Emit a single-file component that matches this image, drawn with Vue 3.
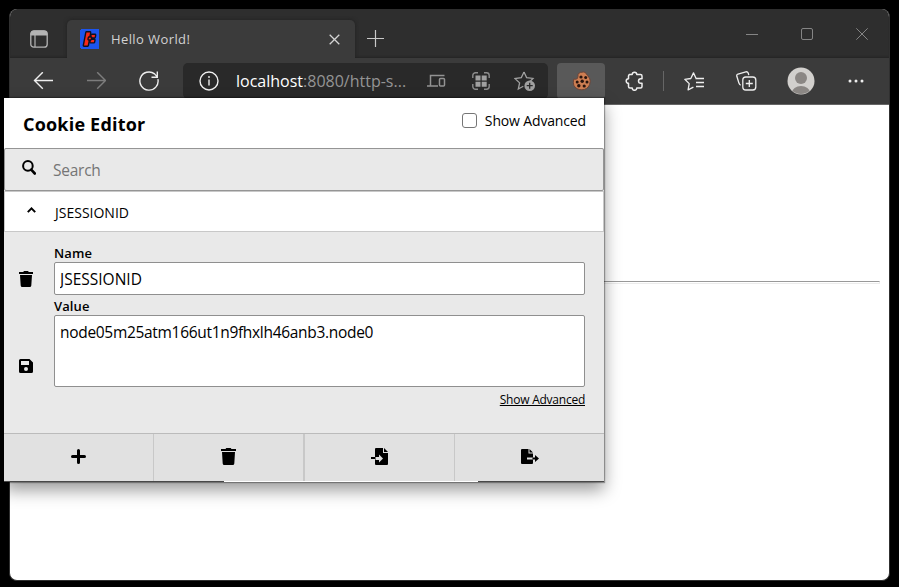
<script setup>
import { ref } from 'vue'

const tabTitle = 'Hello World!'
const cookieName = ref('JSESSIONID')
const cookieValue = ref('node05m25atm166ut1n9fhxlh46anb3.node0')
const search = ref('')
const advanced = ref(false)
</script>

<template>
  <div class="desktop">
    <div class="window">
      <header class="titlebar">
        <div class="tab-menu">
          <svg width="18" height="18" viewBox="0 0 18 18" fill="none" stroke="#b4b4b4">
            <path d="M1 5V4a3 3 0 0 1 3-3h10a3 3 0 0 1 3 3v1z" fill="#b4b4b4" />
            <rect x=".8" y=".8" width="16.4" height="16.4" rx="3" stroke-width="1.3" />
            <path d="M5 5v12" stroke-width="1.2" />
          </svg>
        </div>
        <div class="tab">
          <svg class="favicon" width="19" height="20" viewBox="0 0 19 20">
            <path d="M0 1h1V0h18v20H1v-1H0z" fill="#1d55ee" />
            <g fill="#fb2917" stroke="#111020" stroke-width="2.800" stroke-linejoin="round" paint-order="stroke"><path d="M6.500 3.500H10L7.700 16.500H4z" /><path d="M11.700 6H15l-.4 2.300h-3.300zM11 11h3.300l-.4 2.200h-3.300z" /><path d="M9 8.700h2l-.3 1.600h-2z" /></g>
          </svg>
          <span class="tab-title">{{ tabTitle }}</span>
          <svg class="tab-close" width="11" height="11" viewBox="0 0 11 11" stroke="#d4d4d4" stroke-width="1.300"><path d="M.7.7l9.600 9.600M10.300.7L.7 10.300" /></svg>
        </div>
        <svg class="new-tab" width="17" height="17" viewBox="0 0 17 17" stroke="#c9c9c9" stroke-width="1.200"><path d="M8.500 0v17M0 8.500h17" /></svg>
        <div class="controls">
          <svg width="12" height="12" viewBox="0 0 12 12" stroke="#858585"><path d="M0 6.500h12" /></svg>
          <svg width="12" height="12" viewBox="0 0 12 12" fill="none" stroke="#858585"><rect x=".5" y=".5" width="11" height="11" rx="1.500" /></svg>
          <svg width="12" height="12" viewBox="0 0 12 12" stroke="#858585"><path d="M.3.3l11.400 11.400M11.700.3L.3 11.700" /></svg>
        </div>
      </header>

      <div class="toolbar">
        <div class="tool"><svg width="20" height="18" viewBox="0 0 20 18" fill="none" stroke="#eee" stroke-width="1.400"><path d="M20 8.500H1.500M9.800.2L1.500 8.500l8.300 8.300" /></svg></div>
        <div class="tool"><svg width="20" height="18" viewBox="0 0 20 18" fill="none" stroke="#7d7d7d" stroke-width="1.400"><path d="M1 8.500H19.500M11.200.2L19.500 8.500l-8.300 8.300" /></svg></div>
        <div class="tool"><svg width="20" height="20" viewBox="0 0 20 20" fill="none" stroke="#eee" stroke-width="1.400"><path d="M18.900 8.200A9.100 9.100 0 1 1 15.600 2.900L18 5.600M18.300.5v5.800h-5.800" /></svg></div>
        <div class="address">
          <svg class="info" width="20" height="20" viewBox="0 0 20 20" fill="none" stroke="#eee" stroke-width="1.400"><circle cx="10" cy="10" r="9" /><path d="M10 8.500v6" /><circle cx="10" cy="6" r=".9" fill="#eee" stroke="none" /></svg>
          <span class="url"><b>localhost</b>:8080/http-s...</span>
          <svg class="devices" width="19" height="14" viewBox="0 0 19 14" fill="none" stroke="#929292" stroke-width="1.500"><path d="M17.500 1.500h-14v10M0 12h11" /><rect x="12.500" y="4.500" width="5" height="7.500" rx="1" /></svg>
          <svg class="qr" width="18" height="18" viewBox="0 0 18 18" fill="none" stroke="#8c8c8c" stroke-width="1.400"><path d="M.8 6V3.500A2.700 2.700 0 0 1 3.500.8H6M12 .8h2.500a2.700 2.700 0 0 1 2.700 2.700V6M17.200 12v2.500a2.700 2.700 0 0 1-2.700 2.700H12M6 17.200H3.500a2.700 2.700 0 0 1-2.700-2.700V12" /><path d="M3.500 3.500h5v5h-5zM9.700 3.500h5v5h-5zM3.500 9.700h5v5h-5zM9.700 9.700h5v5h-5z" fill="#a0a0a0" stroke="none" /></svg>
          <svg class="fav" width="22" height="21" viewBox="0 0 22 21" fill="none" stroke="#a0a0a0" stroke-width="1.300"><path d="M10 1l2.600 5.600 6.400.8-4 4.100M10 1L7.300 6.600.9 7.500l4.700 4.400L4.300 18l5-2.700" /><circle cx="15.700" cy="14.700" r="5.300" fill="#a0a0a0" stroke="none" /><path d="M15.700 11.700v6M12.700 14.700h6" stroke="#292929" stroke-width="1.300" /></svg>
        </div>
        <div class="extension">
          <svg width="19" height="20" viewBox="0 0 19 20"><path d="M6 3Q8 .8 11.500 1q1.500.2 2.500 1.200.200 1.500 1.700 2 .200 2 1.800 2.600 1.500 3.300.1 6.900-2.300 5.100-7.800 5.100-5.600 0-8-4.500-1-3 0-6.300 2 .8 3.600-.5Q6.300 5.500 6 3z" fill="#cd7e52" stroke="#6e4538" /><g fill="#28140e"><circle cx="9" cy="6" r="1.600" /><circle cx="13.700" cy="6.500" r="1.500" /><circle cx="5.200" cy="11" r="1.500" /><circle cx="10.200" cy="10.300" r="1.700" /><circle cx="15" cy="11" r="1.500" /><circle cx="6.800" cy="14.800" r="1.700" /><circle cx="12.200" cy="15" r="1.600" /></g></svg>
        </div>
        <div class="tool puzzle"><svg width="19" height="20" viewBox="0 0 19 20" fill="none" stroke="#eee" stroke-width="1.500" stroke-linejoin="round"><path d="M4 3.500h3.200a2.300 2.300 0 0 1 4.600 0H15.500q1.500 0 1.500 1.500v2.700h-1.200a2.300 2.300 0 0 0 0 4.600H17V15.500q0 1.500-1.500 1.500h-3.700a2.300 2.300 0 0 1-4.600 0H5q-1.500 0-1.500-1.500v-3.200a2.300 2.300 0 0 1 0-4.600V5q0-1.500 1.500-1.500" /></svg></div>
        <div class="divider"></div>
        <div class="tool star"><svg width="20" height="19" viewBox="0 0 20 19" fill="none" stroke="#eee" stroke-width="1.300" stroke-linejoin="round"><path d="M12 6.200L9.500.9 6.800 6.500.8 7.300l4.400 4.300-1.100 6.300 5.300-2.800M11.500 6.500H20M12 10.500h8M12 14.500h8" /></svg></div>
        <div class="tool"><svg width="21" height="20" viewBox="0 0 21 20" fill="none" stroke="#eee" stroke-width="1.300"><path d="M4.700 14.200q-1.300-.4-1.700-2L.8 5.300Q.4 3.600 2 3L9.800.8q1.700-.4 2.400 1.200l.6 2.200" /><rect x="6.800" y="6" width="13" height="13" rx="3" /><path d="M13.300 9v7M9.800 12.500h7" /></svg></div>
        <div class="tool profile"><svg width="28" height="28" viewBox="0 0 28 28"><defs><clipPath id="face"><circle cx="14" cy="14" r="13" /></clipPath></defs><circle cx="14" cy="14" r="13.500" fill="#d2d0cd" /><g clip-path="url(#face)" fill="#8b8784"><circle cx="14" cy="11" r="6" /><ellipse cx="14" cy="25.500" rx="9" ry="6.500" /></g></svg></div>
        <div class="tool more"><svg width="16" height="4" viewBox="0 0 16 4" fill="#eee"><circle cx="2" cy="2" r="1.500" /><circle cx="8" cy="2" r="1.500" /><circle cx="14" cy="2" r="1.500" /></svg></div>
      </div>
      <main class="page"><div class="rule"></div></main>
    </div>

    <section class="popup">
      <header class="popup-head">
        <h1>Cookie Editor</h1>
        <label class="toggle"><input v-model="advanced" type="checkbox" /><span>Show Advanced</span></label>
      </header>
      <div class="search">
        <svg width="14" height="15" viewBox="0 0 14 15" fill="none" stroke="#000"><circle cx="5.900" cy="5.900" r="4.800" stroke-width="2" /><path d="M9.200 9.700l3.600 3.800" stroke-width="2.600" stroke-linecap="round" /></svg>
        <input v-model="search" placeholder="Search" />
      </div>
      <div class="cookie-row">
        <svg width="9" height="6" viewBox="0 0 9 6" fill="none" stroke="#000" stroke-width="2"><path d="M.8 5.100l3.700-3.700 3.700 3.700" /></svg>
        <span>{{ cookieName }}</span>
      </div>
      <div class="editor">
        <div class="side">
          <svg width="14" height="16" viewBox="0 0 14 16"><path d="M0 1h4.200l.8-1h4l.8 1H14v2H0zM1 4h12l-.7 10.500q-.1 1.500-1.600 1.500H3.300q-1.500 0-1.600-1.500z" /></svg>
          <svg width="14" height="14" viewBox="0 0 14 14"><path fill-rule="evenodd" d="M1.500 0h9L14 3.500v9q0 1.500-1.500 1.500h-11Q0 14 0 12.500v-11Q0 0 1.500 0zM2 2v4h8V2zm5 6a2 2 0 1 0 0 4 2 2 0 0 0 0-4z" /></svg>
        </div>
        <div class="fields">
          <label class="caption">Name</label>
          <input v-model="cookieName" class="name-input" />
          <label class="caption second">Value</label>
          <textarea v-model="cookieValue"></textarea>
          <a class="more-link">Show Advanced</a>
        </div>
      </div>
      <footer class="actions">
        <div class="action"><svg width="16" height="16" viewBox="0 0 16 16" stroke="#000" stroke-width="3" stroke-linecap="round"><path d="M7.500 1.500v12M1.500 7.500h12" /></svg></div>
        <div class="action"><svg width="15" height="17" viewBox="0 0 15 17"><path d="M0 1h4.500l.8-1h4.400l.8 1H15v2H0zM1 4h13l-.7 11.500q-.1 1.500-1.600 1.500H3.300q-1.500 0-1.600-1.500z" /></svg></div>
        <div class="action"><svg width="18" height="17" viewBox="0 0 18 17"><path d="M5 0h7v5h5v11q0 1-1 1H5q-1 0-1-1V1q0-1 1-1zM13 0l4 4h-4z" /><path d="M0 10h4.500" stroke="#000" stroke-width="2" /><path d="M4.500 9H8V6.500l4 4-4 4V12H4.500z" fill="#e1e1e1" /></svg></div>
        <div class="action"><svg width="18" height="15" viewBox="0 0 18 15"><path d="M1 0h6.500v4.500H12V14q0 1-1 1H1q-1 0-1-1V1q0-1 1-1zM8.500 0L12 3.500H8.500z" /><path d="M6 8.500h6v2H6z" fill="#e1e1e1" /><path d="M11.500 8.500H14V6l4 3.500-4 3.500v-2.500h-2.500z" /></svg></div>
      </footer>
      <div class="edge"></div>
    </section>
  </div>
</template>

<style>
body { background: #000; overflow: hidden; }
</style>

<style scoped>
* { box-sizing: border-box; }
svg { display: block; flex: none; }
.desktop { position: relative; width: 899px; height: 587px; padding: 9px 9px 6px; background: #000; font-family: "Open Sans", "Noto Sans", sans-serif; overflow: hidden; }
.window { width: 881px; height: 572px; border-radius: 8px; overflow: hidden; background: #fff; border: 1px solid #303030; border-top: 0; display: flex; flex-direction: column; }
.titlebar { height: 49px; background: #2e2e2e; display: flex; flex: none; box-shadow: inset 0 -2px 2px -1px #242424; }
.tab-menu { width: 57px; padding: 21px 0 0 20px; }
.tab { width: 288px; height: 38px; margin-top: 11px; border-radius: 5px 5px 0 0; background: #3b3b3b; display: flex; align-items: center; padding: 0 15px 0 13px; box-shadow: 0 0 4px #202020; clip-path: inset(-4px -4px 0); }
.tab-title { margin-left: 12px; font-size: 13px; color: #d2d2d2; letter-spacing: .4px; flex: 1; }
.new-tab { margin: 21px 0 0 12px; }
.controls { display: flex; gap: 43px; margin: 19px 21px 0 auto; }
.toolbar { height: 47px; background: #3b3b3b; display: flex; align-items: center; flex: none; padding-left: 6px; border-bottom: 1px solid #666; }
.tool { width: 53px; display: flex; justify-content: center; }
.address { width: 365px; height: 36px; margin: 0 9px 0 8px; border-radius: 5px; background: #292929; display: flex; align-items: center; padding-left: 16px; }
.url { width: 172px; margin-left: 17px; color: #949494; font-size: 16px; white-space: nowrap; }
.url b { color: #fff; font-weight: 400; }
.devices { margin-left: 19px; }
.qr { margin-left: 26px; }
.fav { margin-left: 24px; }
.extension { width: 48px; height: 36px; background: #595959; border-radius: 4px; display: flex; align-items: center; justify-content: center; }
.puzzle { margin-left: 3px; }
.divider { width: 1px; height: 20px; background: #666; margin: 0 2px; }
.star { margin-left: 1px; }
.profile { margin-left: 1px; }
.more { margin-left: 2px; }
.page { flex: 1; padding: 176px 9px 0; }
.rule { height: 3px; border: 1px solid #ececec; border-top-color: #999; }

.popup { position: absolute; left: 4px; top: 98px; width: 600px; height: 384px; background: #e9e9e9; box-shadow: 0 0 1px 1px rgba(0,0,0,.32), 0 8px 16px rgba(0,0,0,.4); display: flex; flex-direction: column; color: #000; }
.popup-head { height: 50px; flex: none; background: #fff; display: flex; justify-content: space-between; padding: 0 18px 0 19px; }
h1 { margin: 0; font-size: 18px; line-height: 52px; font-weight: 700; letter-spacing: .2px; }
.toggle { display: flex; align-items: flex-start; padding-top: 15px; font-size: 14px; line-height: 16px; letter-spacing: -.15px; }
.toggle input { appearance: none; width: 15px; height: 15px; margin: 0 8px 0 0; border: 1.5px solid #767676; border-radius: 3px; background: #fff; }
.search { height: 43px; flex: none; display: flex; border: 1px solid #959595; border-radius: 2px; padding: 0 0 0 17px; }
.search svg { margin-top: 11px; }
.search input { border: 0; padding: 0; margin-left: 17px; height: 42px; width: 400px; outline: 0; background: none; font: 15.5px "Open Sans", sans-serif; letter-spacing: -.25px; }
.search input::placeholder { color: #757575; }
.cookie-row { height: 41px; flex: none; background: #fff; border: 1px solid #c8c8c8; display: flex; align-items: center; padding-left: 22px; font-size: 14px; }
.cookie-row span { padding-top: 2px; }
.cookie-row svg { margin: 0 19px 4px 0; }
.editor { height: 201px; flex: none; display: flex; }
.side { width: 50px; padding: 39px 0 0 15px; display: flex; flex-direction: column; gap: 72px; }
.fields { width: 531px; padding-top: 11px; display: flex; flex-direction: column; }
.caption { height: 19px; line-height: 20px; font-size: 13px; font-weight: 600; letter-spacing: .1px; }
.second { height: 20px; line-height: 22px; }
.name-input, textarea { display: block; width: 531px; margin: 0; border: 1px solid #8f8f8f; border-radius: 2px; background: #fff; padding: 0 5px; outline: 0; font: 15.5px "Open Sans", sans-serif; resize: none; overflow: hidden; color: #000; }
.name-input { height: 33px; padding-top: 1px; }
textarea { height: 72px; padding-top: 5px; line-height: 22px; letter-spacing: -.31px; }
.more-link { align-self: flex-end; margin-top: 5px; line-height: 16px; font-size: 12px; letter-spacing: -.24px; text-decoration: underline; }
.actions { height: 49px; flex: none; display: grid; grid-template-columns: 150px 151px 150px 149px; background: #e1e1e1; border-top: 1px solid #bbb; }
.action { display: flex; align-items: center; justify-content: center; border-right: 1px solid #c8c8c8; padding-bottom: 3px; }
.action:nth-child(2) { border-right-width: 2px; }
.action:last-child { border-right: 0; }
.edge { height: 1px; margin-top: -1px; flex: none; background: linear-gradient(90deg, #484848 220px, #fff 220px, #fff 474px, #484848 474px); }
</style>
